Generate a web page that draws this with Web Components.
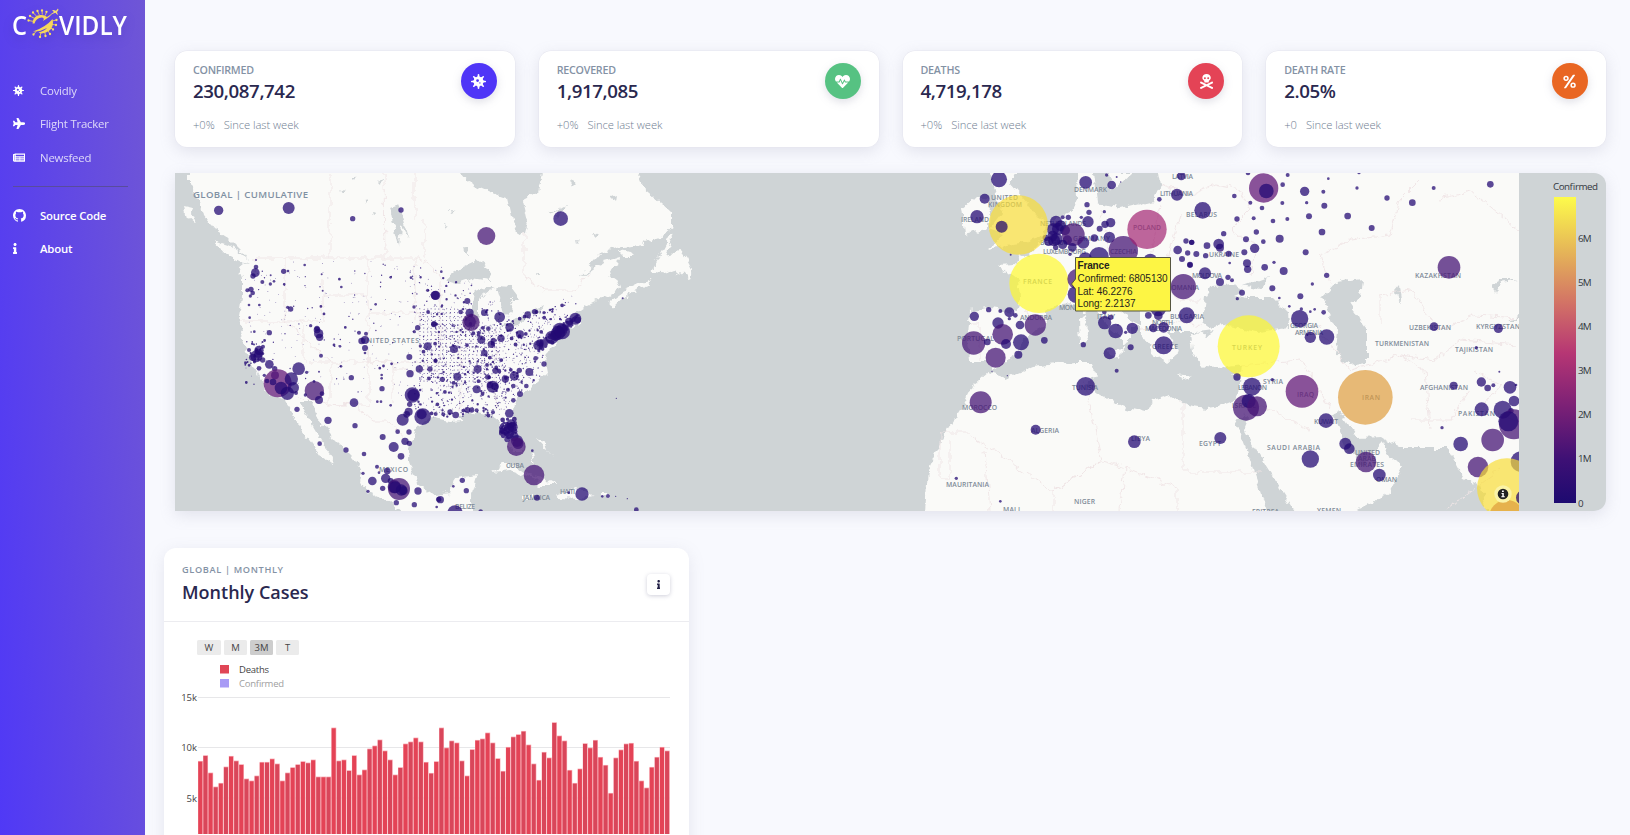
<!DOCTYPE html>
<html lang="en"><head><meta charset="utf-8"><title>Covidly</title>
<style>html,body{margin:0;height:100%;overflow:hidden;background:#f8f9fe;font-family:"Open Sans","Noto Sans",sans-serif}</style></head>
<body><covid-app></covid-app>
<script>
const ICONS={
virus:['0 0 512 512','M483.55 227.55H462c-50.68 0-76.07-61.27-40.23-97.11L437 115.19A28.44 28.44 0 0 0 396.8 75L381.56 90.22c-35.84 35.83-97.11 10.45-97.11-40.23V28.44a28.45 28.45 0 0 0-56.9 0V50c0 50.68-61.27 76.06-97.11 40.23L115.2 75A28.44 28.44 0 0 0 75 115.19l15.25 15.25c35.84 35.84 10.45 97.11-40.23 97.11H28.45a28.45 28.45 0 1 0 0 56.89H50c50.68 0 76.07 61.28 40.23 97.12L75 396.8A28.45 28.45 0 0 0 115.2 437l15.24-15.25c35.84-35.84 97.11-10.45 97.11 40.23v21.54a28.45 28.45 0 0 0 56.9 0V462c0-50.68 61.27-76.07 97.11-40.23L396.8 437A28.45 28.45 0 0 0 437 396.8l-15.25-15.24c-35.84-35.84-10.45-97.12 40.23-97.12h21.54a28.45 28.45 0 1 0 0-56.89zM224 272a48 48 0 1 1 48-48 48 48 0 0 1-48 48zm80 56a24 24 0 1 1 24-24 24 24 0 0 1-24 24z'],
plane:['0 0 576 512','M480 192H365.71L260.61 8.06A16 16 0 0 0 246.71 0h-65.5c-10.63 0-18.3 10.17-15.38 20.39L214.86 192H112l-43.2-57.6c-3.02-4.03-7.77-6.4-12.8-6.4H16.01C5.6 128-2.04 137.78.49 147.88L32 256 .49 364.12C-2.04 374.22 5.6 384 16.01 384H56c5.04 0 9.78-2.37 12.8-6.4L112 320h102.86l-49.03 171.6c-2.92 10.22 4.75 20.4 15.38 20.4h65.5c5.74 0 11.04-3.08 13.89-8.06L365.71 320H480c35.35 0 96-28.65 96-64s-60.65-64-96-64z'],
news:['0 0 576 512','M552 64H88c-13.255 0-24 10.745-24 24v8H24c-13.255 0-24 10.745-24 24v272c0 30.928 25.072 56 56 56h472c26.51 0 48-21.49 48-48V88c0-13.255-10.745-24-24-24zM56 400a8 8 0 0 1-8-8V144h16v248a8 8 0 0 1-8 8zm236-16H140c-6.627 0-12-5.373-12-12v-8c0-6.627 5.373-12 12-12h152c6.627 0 12 5.373 12 12v8c0 6.627-5.373 12-12 12zm208 0H348c-6.627 0-12-5.373-12-12v-8c0-6.627 5.373-12 12-12h152c6.627 0 12 5.373 12 12v8c0 6.627-5.373 12-12 12zm-208-96H140c-6.627 0-12-5.373-12-12v-8c0-6.627 5.373-12 12-12h152c6.627 0 12 5.373 12 12v8c0 6.627-5.373 12-12 12zm208 0H348c-6.627 0-12-5.373-12-12v-8c0-6.627 5.373-12 12-12h152c6.627 0 12 5.373 12 12v8c0 6.627-5.373 12-12 12zm0-96H140c-6.627 0-12-5.373-12-12v-40c0-6.627 5.373-12 12-12h360c6.627 0 12 5.373 12 12v40c0 6.627-5.373 12-12 12z'],
github:['0 0 16 16','M8 0C3.58 0 0 3.58 0 8c0 3.54 2.29 6.53 5.47 7.59.4.07.55-.17.55-.38 0-.19-.01-.82-.01-1.49-2.01.37-2.53-.49-2.69-.94-.09-.23-.48-.94-.82-1.13-.28-.15-.68-.52-.01-.53.63-.01 1.08.58 1.23.82.72 1.21 1.87.87 2.33.66.07-.52.28-.87.51-1.07-1.78-.2-3.64-.89-3.64-3.95 0-.87.31-1.59.82-2.15-.08-.2-.36-1.02.08-2.12 0 0 .67-.21 2.2.82.64-.18 1.32-.27 2-.27s1.36.09 2 .27c1.53-1.04 2.2-.82 2.2-.82.44 1.1.16 1.92.08 2.12.51.56.82 1.27.82 2.15 0 3.07-1.87 3.75-3.65 3.95.29.25.54.73.54 1.48 0 1.07-.01 1.93-.01 2.2 0 .21.15.46.55.38A8.01 8.01 0 0 0 16 8c0-4.42-3.58-8-8-8z'],
info:['0 0 192 512','M20 424.229h20V279.771H20c-11.046 0-20-8.954-20-20V212c0-11.046 8.954-20 20-20h112c11.046 0 20 8.954 20 20v212.229h20c11.046 0 20 8.954 20 20V492c0 11.046-8.954 20-20 20H20c-11.046 0-20-8.954-20-20v-47.771c0-11.046 8.954-20 20-20zM96 0C56.235 0 24 32.235 24 72s32.235 72 72 72 72-32.235 72-72S135.764 0 96 0z'],
heart:['0 0 512 512','M320.2 243.8l-49.7 99.4c-6 12.1-23.4 11.7-28.9-.6l-56.9-126.3-30 71.7H60.6l182.5 186.5c7.1 7.3 18.6 7.3 25.7 0L451.4 288H342.3l-22.1-44.2zM473.7 73.9l-2.4-2.5c-51.500-52.600-135.800-52.600-187.400 0L256 100l-27.900-28.500c-51.500-52.700-135.900-52.700-187.400 0l-2.400 2.400C-10.400 123.700-12.500 203 31 256h102.400l35.900-86.200c5.400-12.900 23.600-13.200 29.400-.4l58.200 129.300 49-97.900c5.900-11.800 22.700-11.800 28.600 0l27.600 55.200H481c43.500-53 41.400-132.300-7.300-182.100z'],
skull:['0 0 448 512','M439.15 453.06L297.17 384l141.990-69.060c7.900-3.950 11.110-13.560 7.150-21.460L432 264.850c-3.950-7.900-13.560-11.110-21.470-7.160L224 348.410 37.470 257.690c-7.900-3.950-17.510-.750-21.470 7.160L1.690 293.480c-3.950 7.900-.75 17.510 7.150 21.460L150.830 384 8.850 453.06c-7.900 3.950-11.110 13.560-7.150 21.470l14.310 28.630c3.950 7.900 13.560 11.110 21.470 7.150L224 419.590l186.530 90.720c7.900 3.950 17.510.75 21.470-7.150l14.310-28.630c3.950-7.910.74-17.520-7.160-21.470zM150 237.280l-5.480 25.870c-2.670 12.620 5.420 24.850 16.450 24.850h126.080c11.030 0 19.120-12.230 16.450-24.850l-5.500-25.870c41.780-22.410 70-62.750 70-109.280C368 57.310 303.530 0 224 0S80 57.310 80 128c0 46.530 28.220 86.870 70 109.280zM280 112c17.650 0 32 14.350 32 32s-14.350 32-32 32-32-14.350-32-32 14.350-32 32-32zm-112 0c17.650 0 32 14.350 32 32s-14.350 32-32 32-32-14.350-32-32 14.350-32 32-32z'],
percent:['0 0 448 512','M104 240a92 92 0 1 1 0-184 92 92 0 0 1 0 184zm0-132a40 40 0 1 0 0 80 40 40 0 0 0 0-80zM344 472a92 92 0 1 1 0-184 92 92 0 0 1 0 184zm0-132a40 40 0 1 0 0 80 40 40 0 0 0 0-80zM356 24h44q22 0 10 20L108 474q-9 14-24 14H46q-22 0-10-20L332 38q9-14 24-14z']};
const icon=(n,h)=>`<svg viewBox="${ICONS[n][0]}" height="${h}" fill="currentColor" fill-rule="evenodd"><path d="${ICONS[n][1]}"/></svg>`;
function define(name,render){customElements.define(name,class extends HTMLElement{connectedCallback(){const r=this.attachShadow({mode:'open'});r.innerHTML=render(this)}})}

define('nav-link',e=>`<style>:host{display:flex;height:33.3px;align-items:center;color:#fff}i{display:flex;width:27px}span{font-size:11.4px;letter-spacing:-.2px;opacity:${e.hasAttribute('strong')?1:.78};font-weight:${e.hasAttribute('strong')?600:400}}</style><i>${icon(e.getAttribute('icon'),e.getAttribute('size')||11)}</i><span><slot></slot></span>`);

define('covid-logo',()=>{
const s=[[28.5,20.500],[30,16],[33,12.500],[37.500,11],[42,10.500],[46.500,11.800],[56.500,20],[56,25],[53,29.500],[50,34],[45.500,36],[40,37],[33.500,34.500]].map(([x,y])=>`<path d="M${x} ${y}L${x+(43-x)*.32} ${y+(23-y)*.32}" stroke="#f0cf5c" stroke-width=".9"/><circle cx="${x}" cy="${y}" r="1.150" fill="#f9df63"/>`).join('');
return `<style>:host{display:block;height:46px}svg{display:block;filter:drop-shadow(0 4px 5px #3220a044)}</style><svg width="145" height="46" viewBox="0 0 145 46"><text x="12" y="34.500" textLength="15" lengthAdjust="spacingAndGlyphs" font-size="27.500" font-weight="600" fill="#fff">C</text>${s}<path d="M32.500 23.500Q33 15.500 40 15Q45 14.500 47 17Q50 15 54 12Q49 18 43 21Q45 18 42 17.500Q36 18 34.500 23.500zM33 31.500Q46 27 52.500 19Q55 30 44 33Q41 34 38.500 32.500Q45 30.500 47 28Q40 32 33 31.500z" fill="#f7d75a"/><path d="M50.500 14.500L54 12 52 10.500 53.500 10 56 10.800 58 8.500 58.500 10 57 12 58 15 56.500 14 55.500 12.800z" fill="#f9df73"/><text x="59" y="34.500" textLength="68" lengthAdjust="spacingAndGlyphs" font-size="27.500" font-weight="600" fill="#fff">VIDLY</text></svg>`});

define('side-nav',()=>`<style>:host{display:block;width:145px;height:835px;background:linear-gradient(86deg,#5039f6 0%,#5d44e9 40%,#6f56d6 100%);flex:none}nav{padding:28px 13px 0}hr{height:0;border:0;border-top:1.500px solid #594c9c;margin:12px 4px 12px 0}</style><covid-logo></covid-logo><nav><nav-link icon="virus" size="11">Covidly</nav-link><nav-link icon="plane" size="11">Flight Tracker</nav-link><nav-link icon="news" size="11">Newsfeed</nav-link><hr><nav-link icon="github" size="13" strong>Source Code</nav-link><nav-link icon="info" size="11" strong>About</nav-link></nav>`);

define('stat-card',e=>`<style>:host{display:flex;justify-content:space-between;box-sizing:border-box;flex:1;height:96px;background:#fff;border-radius:12px;padding:12px 18px 0;box-shadow:0 0 0 .5px #e6e6ef,0 4px 16px #8888a033}
.t{font-size:10.700px;letter-spacing:-.25px;line-height:14px;font-weight:600;color:#8492a5;text-transform:uppercase}.n{font-size:18.700px;letter-spacing:-.4px;line-height:27px;font-weight:600;color:#2a284f}.f{display:flex;gap:9px;font-size:11.200px;letter-spacing:-.05px;line-height:16px;font-weight:300;color:#6f7e92;margin-top:13px}b{display:flex;width:36px;height:36px;border-radius:50%;align-items:center;justify-content:center;color:#fff;background:${e.getAttribute('color')};box-shadow:0 3px 8px #8888a044;flex:none}</style><div><div class="t">${e.getAttribute('label')}</div><div class="n"><slot></slot></div><div class="f"><span>${e.getAttribute('change')}</span><span>Since last week</span></div></div><b>${icon(e.getAttribute('icon'),15)}</b>`);

/* circle triples are x, y, radius in thirds of a pixel from each panel's origin */
const PTS=[
[170,165,`146,136,14 356,129,18 548,161,8 693,135,8 258,285,3 258,306,7 256,323,13 249,333,8 341,319,8 354,318,4 404,300,4 455,328,3 514,366,4 277,351,6 301,357,5 312,349,4 302,331,3 243,373,8 232,376,6 248,384,7 241,393,5 237,420,4 268,420,4 239,458,4 353,427,5 362,432,8 458,377,3 406,335,2 662,337,4 723,338,4 617,418,4 732,426,5 773,376,5 797,391,14 792,478,9 743,488,8 733,500,5 298,503,8 253,500,4 422,482,5 441,495,10 446,506,14 449,517,11 441,490,8 453,572,6 510,544,4 567,503,6 588,506,6 575,528,10 585,525,12 585,549,9 585,564,4 237,555,6 267,556,14 259,574,18 248,577,11 266,566,13 278,585,8 279,545,6 267,610,7 283,631,5 298,598,13 314,611,8 315,631,12 323,655,42,p 291,648,7 309,651,10 333,669,19 352,685,20 364,642,20 370,668,17 386,611,19 378,684,6 433,677,29,q 432,649,4 456,686,7 447,705,12 406,690,5 410,622,5 447,620,3 381,733,8 474,766,11 555,782,8 449,836,7 528,855,8 582,867,7 552,713,13 544,638,8 513,604,4 635,630,4 635,640,4 636,671,8 633,710,4 622,710,4 662,721,4 718,576,9 748,612,11 720,626,11 780,612,8 773,544,12 751,543,5 797,587,6 727,690,23 730,690,18 719,718,8 716,740,12 710,748,10 698,764,18 758,755,25 755,748,15 797,747,6 683,800,7 717,801,8 638,816,9 705,829,11 718,835,8 671,846,15 693,874,10 621,905,6 652,918,10 627,923,4 579,925,5 607,948,13 647,940,14 662,948,9 673,965,20 687,972,33,q 694,975,17 675,967,18 700,977,13 638,970,8 594,979,5 744,978,11 679,1013,8 733,1019,8 806,1003,8`],
[430,165,`169,213,27,q 392,161,22 15,391,13 34,320,4 12,477,8 72,552,12 16,587,6 82,635,12 112,408,9 92,441,7 119,443,12 120,470,18 123,472,26,q 163,443,10 209,456,16 175,491,7 154,524,12 184,538,11 190,526,8 213,520,11 239,487,13 270,508,12 293,449,10 314,440,8 342,443,5 360,435,4 436,461,18 443,465,10 417,470,12 390,495,22 384,504,21 366,517,20 377,511,17 397,500,23 325,541,15 330,534,11 317,580,7 342,597,8 163,564,10 143,612,12 37,643,8 140,673,12 188,665,18 180,660,10 195,664,11 173,636,8 196,617,9 226,642,11 253,633,14 268,616,8 298,621,12 289,663,7 270,687,9 250,706,7 250,663,7 234,674,6 60,741,8 77,750,10 40,748,6 112,735,9 125,735,8 140,736,6 189,742,6 238,745,13 243,776,13 225,795,15 237,790,15 248,787,15 216,797,9 231,806,9 252,814,14 261,828,18 264,836,16 232,823,9 259,845,28,q 307,857,4 312,930,31,q 416,983,4 456,987,20 321,998,9 517,994,4 534,993,6 557,994,2 592,1001,2 619,1034,7 97,946,8 109,977,8 70,964,4 31,1004,11 20,1026,4 75,1044,23 152,1040,7 578,400,3 559,700,2`],
[940,165,`177,43,24 134,101,15 111,155,20 437,52,19 515,60,13 500,30,5 530,36,3 542,51,2 441,119,8 447,142,8 493,140,5 424,157,5 444,170,17 512,173,14 495,178,11 479,191,9 508,217,17 463,219,11 430,233,18 382,225,14 348,170,18 339,193,18 354,192,18 362,182,16 375,196,15 385,157,8 368,157,6 400,209,34,q 397,247,13 390,268,5 350,222,18 338,212,15 326,229,14 342,226,18 317,218,9 347,247,8 368,238,14 235,180,89,y 185,185,18,i 212,269,3 297,355,89,Y 550,257,44,q 621,193,59,r 477,275,29 436,282,20 413,342,31,q 409,388,26 724,33,13 711,89,18 658,103,7 738,228,8 755,232,8 713,255,13 743,264,8 726,282,9 750,299,9 730,365,38,q 740,451,24 631,286,20 655,430,24 625,451,10 655,452,13 640,489,13 671,487,16 671,541,27 494,473,20 527,498,22 512,457,8 493,441,7 534,480,2 557,502,5 577,490,17 572,547,9 509,565,18 430,539,8 530,617,6 146,434,8 181,438,6 208,442,15 226,451,7 208,461,5 103,454,14 174,474,17 240,480,13 188,508,31,q 286,480,32,q 101,534,35,q 142,531,10 198,537,15 243,532,24 167,578,30,q 235,569,12 313,526,10 156,619,2 202,632,2 437,664,28 122,712,33,q 287,794,15 583,830,19 49,940,5 181,1009,4`],
[1190,165,`174,24,7 221,69,44,p 229,78,22 293,30,6 278,59,7 133,93,7 344,79,14 400,80,6 415,41,4 501,69,5 507,23,5 591,99,8 667,113,10 38,136,25 181,113,6 216,129,7 277,114,6 350,113,5 403,122,9 141,162,8 191,160,6 249,168,7 292,162,6 357,154,9 473,153,10 545,189,9 396,201,10 101,206,8 199,201,8 168,223,9 220,230,7 269,221,12 5,232,8 51,242,10 86,237,16 90,248,12 19,267,9 47,272,8 116,266,9 163,262,9 194,250,14 347,262,9 171,295,12 173,313,11 119,294,4 252,292,5 224,307,10 281,318,12 45,325,18 114,337,8 126,346,6 90,351,12 0,300,8 410,331,8 367,357,5 247,370,9 156,383,9 142,401,5 268,399,4 298,424,4 331,394,9 334,432,5 361,440,4 374,433,4 401,442,7 329,461,26 361,517,17 410,516,23 352,510,3 176,544,93,Y 141,636,11 186,665,27 168,728,39,q 176,708,21 201,724,30,q 247,644,5 336,679,49,p 526,697,82,o 408,767,22 91,819,18 361,882,26 466,836,18 478,851,16 528,891,31,q 568,930,19`],
[1400,165,`101,69,6 271,58,10 147,307,34,q 102,485,13 295,490,14 229,548,5 298,620,3 161,662,12 244,651,14 263,669,10 280,661,6 330,667,19 348,660,4 342,708,16 245,733,21 308,734,27 333,737,8 342,778,45,q 325,769,30 278,825,34,q 182,837,22 234,906,31,q 126,788,5 363,890,31 321,970,90,y 320,1058,53,o 370,998,22`]];
const COL={p:'#611778',q:'#451475',y:'#f7dc35',Y:'#fdf72a',r:'#a12070',o:'#de9a3b',i:'#25096e'};
function points(){let s='';for(const[x,y,l]of PTS)s+=`<g transform="translate(${x} ${y}) scale(.33333)">`+l.split(' ').map(p=>{const[a,b,r,c]=p.split(',');return `<circle cx="${a}" cy="${b}" r="${r}" fill="${COL[c]||'#230974'}"${c&&'yYor'.includes(c)?' opacity=".93"':''}/>`}).join('')+'</g>';return s}
function counties(){let seed=41,o='';const R=()=>(seed=(seed*16807)%2147483647)/2147483647;
const edge=[[262,573],[300,598],[310,578],[325,560],[350,547],[375,545],[400,515],[417,508]];
const east=y=>{for(let i=1;i<edge.length;i++)if(y<edge[i][0]){const[a,b]=edge[i-1],[c,d]=edge[i];return b+(d-b)*(y-a)/(c-a)}return 500};
const north=x=>x<445?266:x<480?281:x<500?300:x<540?322-(x-500)*.3:310-(x-540)*.5;
const d=(x,y,r)=>{o+=`M${(x-r).toFixed(1)} ${y.toFixed(1)}a${r} ${r} 0 1 0 ${2*r} 0a${r} ${r} 0 1 0 ${-2*r} 0`};
for(let i=0;i<2300;i++){const x=412+R()*168,y=266+R()*151,v=R(),k=R();if(y<north(x)||x>east(y)-3||(x>472&&x<481&&y<320)||(x>500&&x<512&&y<314))continue;if((y<312||x<430)&&k>.32)continue;d(x,y,v>.975?1.9:v>.89?1.2:v>.6?.7:.45)}
for(let y=309;y<385;y+=3.8)for(let x=420;x<500;x+=3.8)if(x<470||y>325)d(x+(R()-.5)*.6,y+(R()-.5)*.6,.5);
for(let i=0;i<230;i++){const x=245+R()*170,y=261+R()*142,v=R();if(y>385&&x<350)continue;d(x,y,v>.96?1.4:v>.75?.7:.4)}
for(let i=0;i<85;i++){const t=R();d(536+t*37+R()*5,345-t*30+R()*7,1.2+R())}
for(let i=0;i<45;i++){d(501+R()*15,419+R()*18,1+R()*1.500)}
for(let i=0;i<22;i++){d(245+R()*20,340+R()*25,.7+R())}
return `<path d="${o}"/>`}
const LABELS=`UNITED STATES,361,343,58;MEXICO,379,472,29;CUBA,506,468,18;JAMAICA,523,500,27;HAITI,560,494,15;BELIZE,455,509,20;UNITED,991,200,27;KINGDOM,988,207,34;IRELAND,961,222,28;DENMARK,1074,192,33;NETHERLANDS,1040,226,46;GERMANY,1073,241,37;BELGIUM,1040,245,30;LUXEMBOURG,1043,254,43;FRANCE,1023,284,29;POLAND,1133,230,28;CZECHIA,1110,254,27;MONACO,1059,310,29;ANDORRA,1020,320,32;PORTUGAL,957,341,37;ITALY,1097,319,18;NORTH,1152,325,21;MACEDONIA,1145,331,37;GREECE,1152,349,26;BULGARIA,1170,319,34;ROMANIA,1167,290,32;MOLDOVA,1192,278,30;UKRAINE,1209,257,30;BELARUS,1186,217,31;LITHUANIA,1160,196,33;LATVIA,1172,179,21;TURKEY,1232,350,30;GEORGIA,1290,328,28;ARMENIA,1295,335,28;SYRIA,1263,384,20;LEBANON,1238,390,29;ISRAEL,1232,408,24;IRAQ,1297,397,17;IRAN,1362,400,18;KUWAIT,1314,424,24;SAUDI ARABIA,1267,450,53;EGYPT,1199,446,22;UNITED,1355,455,25;ARAB,1358,461,18;EMIRATES,1350,467,34;OMAN,1376,482,21;YEMEN,1317,513,24;ERITREA,1252,514,27;MOROCCO,962,410,35;TUNISIA,1072,390,26;ALGERIA,1031,433,28;LIBYA,1131,441,19;MAURITANIA,946,487,43;NIGER,1074,504,21;MALI,1003,512,17;KAZAKHSTAN,1415,278,46;UZBEKISTAN,1409,330,42;KYRGYZSTAN,1476,329,44;TURKMENISTAN,1375,346,54;TAJIKISTAN,1455,352,38;AFGHANISTAN,1420,390,48;PAKISTAN,1458,416,37`;
const labels=()=>LABELS.split(';').map(l=>{const[t,x,y,w]=l.split(',');return `<text x="${x}" y="${y-.3}" textLength="${w}">${t}</text>`}).join('');
const LAND='M190 173 L190 185 200 202 203 215 213 228 227 237 242 252 250 262 238 267 242 278 242 298 239 315 241 332 247 352 258 375 267 392 283 398 292 412 303 432 313 445 322 458 332 465 333 458 325 448 317 432 307 415 300 402 310 402 317 418 333 438 353 458 362 472 360 482 370 493 390 502 403 513 473 513 470 498 477 475 455 478 450 493 433 495 418 485 408 458 410 442 418 425 433 418 450 421 462 420 458 414 477 412 490 415 497 420 502 428 503 438 513 452 523 452 522 438 512 412 513 403 530 388 547 373 545 362 550 348 567 332 580 323 577 312 587 305 607 295 620 288 617 280 610 275 617 265 618 258 603 262 580 278 603 252 617 247 643 243 660 237 672 228 672 213 660 202 643 188 637 173 542 173 538 192 523 200 528 222 525 233 518 235 512 220 507 198 490 192 467 182 460 173Z M184 206L193 208 192 213 197 226 187 217Z M214 240L229 245 249 260 247 265 226 254Z M608 303L623 292 648 280 650 286 630 293 615 307Z M652 270L660 255 672 233 673 238 666 255 680 251 687 260 692 270 690 280 680 272 670 274Z M618 250L630 252 635 257 625 257Z M492 472L502 465 516 465 530 475 545 479 557 485 540 485 534 479 510 470Z M555 494L575 488 588 491 593 496 580 499 558 498Z M601 495h8v3h-8Z M522 497h10v3h-10Z M531 455l4 11 -2 -12z M536 438l10 5 2 8 5 5z M990 173 L1016 173 1011 184 1028 204 1034 214 1048 222 1042 237 1020 244 987 249 1005 234 990 229 1003 212 995 195Z M962 208L978 197 990 200 989 228 965 234Z M997 265 L1015 264 1020 253 1028 256 1040 243 1047 232 1057 218 1073 210 1078 198 1077 173 1093 173 1097 202 1120 208 1153 200 1160 185 1158 173 1539 163 1539 530 1490 520 1480 485 1463 478 1447 448 1400 448 1383 437 1357 438 1340 412 1332 415 1347 448 1363 465 1383 442 1387 455 1403 467 1390 492 1350 513 1295 511 1270 472 1253 445 1243 428 1247 418 1237 398 1240 382 1242 365 1220 368 1200 365 1192 352 1190 335 1200 332 1167 332 1180 352 1167 362 1153 352 1140 332 1140 308 1120 292 1103 272 1090 282 1107 298 1127 315 1140 328 1130 328 1130 343 1122 347 1122 338 1103 322 1090 298 1077 302 1057 305 1047 312 1047 325 1023 338 1017 355 993 370 987 362 970 362 968 338 970 310 990 308 1017 313 1020 298 1018 282Z M925 513L928 468 943 437 963 405 973 385 988 372 1007 378 1033 367 1073 362 1092 362 1095 375 1087 385 1100 395 1127 408 1147 413 1153 400 1170 395 1187 405 1207 408 1227 405 1240 400 1246 418 1234 418 1240 432 1250 460 1270 520Z M1107 173l6 17 19-17z M1080 320l6-4 1 20-6 10z M1083 304l3 10-3-1z M1107 351l17-2-3 11z M1175 374l18 2-9 3z M1232 374l11-3-6 7z'.replace('M190 173','M190 160').replace('L643 188','L643 188');
const WATER='M445 280L462 267 477 260 490 270 491 282 472 279 458 284Z M472 302L475 290 486 286 496 288 485 292 480 300 480 315 477 323 472 317Z M497 287L511 288 520 300 510 300 513 312 505 318 502 305Z M499 329L512 320 530 314 518 325Z M522 313L543 306 540 312Z M390 208l8-3 4 9 7 24-8-12-2 20-5-18z M1205 298L1212 287 1233 285 1245 290 1233 295 1247 298 1273 298 1287 312 1288 328 1257 332 1223 325 1210 328 1202 322Z M1243 285L1270 275 1261 289Z M1323 297L1337 282 1362 278 1360 298 1350 305 1367 328 1367 362 1350 365 1335 355 1338 332Z M1198 332l16-2-7 5z M1395 290l5-6 2 18-5-4z M1492 284l8-4 19 0-18 3-5 11z M1508 320h12v-4z M340 190l5 2-3 2z M352 178l6-2-3 5z M365 200l5-1-4 4z M378 182l4-2-1 5z M372 212l5 1-4 2z M445 225l4 2-3 3z M464 248l4 0 1 6-4-1z M450 210l6 1-5 2z M560 208l6-3-4 8-6 6z M570 180l7 3-4 4z M548 212l12-2-8 4z M612 198l5-2-1 6z M575 240l4 1-3 3z M592 236l5-3-2 6z M535 272l6 0-4 3z';
const BORD='M253 258H420L430 265 442 280 M330 173V258 M384 173L385 258 M425 220V258 M240 321H323V278 M285 258V321L330 362V405 M323 295H368V258 M304 321V362 M308 362H440 M368 295V405H337L297 397 M368 313H420V350 M368 330V362H394V370H440 M393 365V405 M337 405L355 404 375 422 390 422 410 445 M524 233V278L545 290H575L590 272 M415 173V220 M415 258V320 M440 280V360 M460 325V410 M495 330V412 M970 432L940 432V480H950V440 M970 435L1053 491 1102 461 1084 380 M985 450L990 511 M1053 491V511 M1102 461L1125 468 1177 488V511 M1183 403V472H1263 M1053 491L1100 462 M1125 468L1120 511 M1025 312L1047 322 M970 324H980V360 M1060 240L1080 262 1075 300 M1100 210L1112 260 1150 262 1160 205 M1085 261L1130 280 1165 268 1180 215 M1135 290L1160 285 1180 300 1202 300 M1140 330L1180 320 1202 326 M1160 185L1190 195 1215 185 1240 190 1250 210 1230 230 1255 245 1250 275 M1240 365L1300 360 1315 383 1330 410 M1250 400L1310 430 M1316 325L1350 370 1400 355 1425 370 1430 430 M1420 180L1400 200 1390 235 1350 240 1320 255 1330 285 M1380 325V295L1410 290 1440 330 1475 315 1519 318 M1440 200L1470 190 1519 230 M1400 355L1435 360 1460 340 1519 345 M1475 370L1500 385 1480 410 1519 420 M1412 420H1450L1470 390 M1445 510L1500 470';
define('covid-map',()=>`<style>:host{display:block;height:338px;margin-top:26px;border-radius:0 12px 12px 0;overflow:hidden;background:#cfd4d6;box-shadow:0 4px 16px #8888a033}svg{display:block}.l text{font:600 6.800px "Open Sans",Inter,sans-serif;fill:#7f8b98}.k text{font:9.800px "Open Sans",sans-serif;fill:#34383f}.h text{font:10px "Liberation Sans",Arial,sans-serif;fill:#26241c}</style>
<svg width="1431" height="338" viewBox="175 173 1431 338"><defs><filter id="f" x="0" y="0" width="1" height="1"><feTurbulence type="fractalNoise" baseFrequency=".12" numOctaves="3" seed="4"/><feDisplacementMap in="SourceGraphic" scale="9" xChannelSelector="R" yChannelSelector="G"/></filter><clipPath id="m"><path d="M175 173H1519V511H175Z"/></clipPath><linearGradient id="g" x1="0" y1="1" x2="0" y2="0"><stop offset="0" stop-color="#1d0a70"/><stop offset=".14" stop-color="#3d1075"/><stop offset=".32" stop-color="#7d2176"/><stop offset=".49" stop-color="#b63674"/><stop offset=".65" stop-color="#d27166"/><stop offset=".82" stop-color="#e5b458"/><stop offset="1" stop-color="#fdfb4b"/></linearGradient></defs>
<g clip-path="url(#m)"><g filter="url(#f)"><rect x="155" y="150" width="1400" height="390" fill="#cfd4d6"/><path d="${LAND}" fill="#fafaf8"/><path d="M460 174V160H190V174zM637 174V160H542V174zM1016 174V160H990V174zM1093 174V160H1077V174zM1540 174V160H1158V174zM403 510V530H473V510zM925 510V530H1270V510zM1295 510V530H1352V510z" fill="#fafaf8"/><path d="${WATER}" fill="#cfd4d6"/><path d="${BORD}" fill="none" stroke="#efe4e5" stroke-width=".9"/></g>
<g class="l">${labels()}</g><g fill="#230974" opacity=".8">${counties()}</g><g fill-opacity=".74">${points()}</g></g>
<circle cx="1503" cy="494" r="8.700" fill="#fbf3a5"/><circle cx="1503" cy="494" r="5.300" fill="#222"/><path d="M1501.500 493h2.300v3.200h1v1h-3.500v-1h1v-2.200h-.8zM1502 490.500h1.800v1.600h-1.800z" fill="#fff"/>
<text x="193" y="198" textLength="115" font-size="9.600" font-weight="600" fill="#8090a3" style="font-family:Open Sans">GLOBAL | CUMULATIVE</text>
<rect x="1554" y="197" width="22" height="306" fill="url(#g)"/><g class="k"><text x="1553" y="190" textLength="45">Confirmed</text>${['6M','5M','4M','3M','2M','1M'].map((t,i)=>`<text x="1578" y="${242+i*44}" textLength="13.500">${t}</text>`).join('')}<text x="1578" y="507">0</text></g>
<g class="h"><path d="M1075.500 257.500H1170.500V311H1075.500V289L1071.500 284 1075.500 279Z" fill="#fdf544" stroke="#555540"/><text x="1077.500" y="269" textLength="32" style="font-weight:700">France</text><text x="1077.500" y="282" textLength="90">Confirmed: 6805130</text><text x="1077.500" y="295" textLength="55">Lat: 46.2276</text><text x="1077.500" y="307" textLength="58">Long: 2.2137</text></g></svg>`);

const BARS=[667,650,702,744,733,684,652,666,677,720,726,711,670,670,660,675,726,702,686,677,668,672,663,714,714,714,567,666,663,695,650,708,693,630,621,603,636,663,708,686,615,609,597,609,670,703,668,567,627,606,612,666,711,632,604,600,582,612,659,697,625,594,587,577,618,675,724,640,657,551,591,606,694,733,690,614,627,604,655,679,763,657,633,615,613,667,726,747,685,655,625,636];
define('monthly-chart',()=>`<style>:host{display:block}svg{display:block}text{font:9.500px "Open Sans",sans-serif;fill:#444}</style><svg width="525" height="212" viewBox="164 623 525 212">
${[['W',197,24],['M',224,23],['3M',250,23],['T',276,23]].map(([t,x,w])=>`<rect x="${x}" y="641" width="${w}" height="15" rx="1.500" fill="${t=='3M'?'#cdcdcd':'#ebebeb'}"/><text x="${x+w/2}" y="651.500" text-anchor="middle">${t}</text>`).join('')}
<rect x="220" y="666" width="9" height="8.500" fill="#e04656"/><rect x="220" y="680" width="9" height="8.500" fill="#a89bf5"/><text x="239" y="674" textLength="30">Deaths</text><text x="239" y="688" textLength="45" style="fill:#a0a0a0">Confirmed</text>
<path d="M198 698.500H670M198 748.500H670M198 799H670" stroke="#e7e7e9"/>
<text x="197" y="702" text-anchor="end">15k</text><text x="197" y="752" text-anchor="end">10k</text><text x="197" y="803" text-anchor="end">5k</text>
${BARS.map((v,i)=>{const x=198+i*5.13,y=540+v/3-.4;return `<rect x="${x}" y="${y}" width="4.900" height="150" fill="#f9a9b2"/><rect x="${x+.25}" y="${y+.7}" width="4.050" height="150" fill="${i%2?'#d9465a':'#e44356'}"/>`}).join('')}</svg>`);
define('monthly-card',()=>`<style>:host{display:block;width:525px;height:430px;margin:37px 0 0 -11px;background:#fff;border-radius:12px;box-shadow:0 4px 16px #8888a02b}header{display:flex;justify-content:space-between;box-sizing:border-box;height:74px;border-bottom:1px solid #ececf0;padding:15px 19px 0 18px}small{display:block;font-size:9.200px;line-height:14px;letter-spacing:.65px;font-weight:600;color:#8492a5}h2{margin:2px 0 0;font-size:18px;line-height:26px;font-weight:600;color:#2a284f}button{display:flex;align-items:center;justify-content:center;border:0;padding:0;background:#fff;width:23px;height:21px;border-radius:4px;margin-top:11px;color:#222046;box-shadow:0 1px 4px #70709055}</style><header><div><small>GLOBAL | MONTHLY</small><h2>Monthly Cases</h2></div><button>${icon('info',9)}</button></header><monthly-chart></monthly-chart>`);
define('covid-app',()=>`<style>:host{display:flex;height:835px;overflow:hidden}main{flex:1;min-width:0;padding:51px 24px 0 30px}.row{display:flex;gap:24px}</style><side-nav></side-nav><main><div class="row"><stat-card label="Confirmed" change="+0%" icon="virus" color="#4f35f7">230,087,742</stat-card><stat-card label="Recovered" change="+0%" icon="heart" color="#56c282">1,917,085</stat-card><stat-card label="Deaths" change="+0%" icon="skull" color="#e44356">4,719,178</stat-card><stat-card label="Death rate" change="+0" icon="percent" color="#e96622">2.05%</stat-card></div><covid-map></covid-map><monthly-card></monthly-card></main>`);
</script></body></html>
